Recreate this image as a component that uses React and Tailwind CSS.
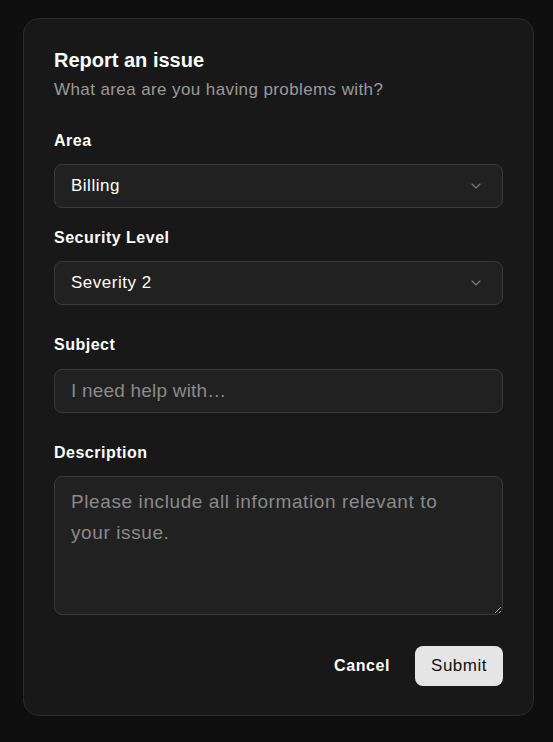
import { ChevronDown } from 'lucide-react'

function Label({ children }) {
  return <label className="block text-[16px] font-bold leading-5 tracking-[0.5px] text-white">{children}</label>
}

function SelectBox({ value }) {
  return (
    <div className="mt-[13px] flex h-11 items-center justify-between rounded-lg border border-[#3a3a3a] bg-[#212121] pl-4 pr-[18px] text-[17px] tracking-[0.5px] text-white">
      <span>{value}</span>
      <ChevronDown className="h-4 w-4 text-[#7a7a7a]" strokeWidth={1.75} />
    </div>
  )
}

export default function App() {
  return (
    <div className="min-h-[742px] bg-[#0f0f0f] pt-[18px] pl-[23px] pr-[19px] pb-[26px]" style={{ fontFamily: '"Liberation Sans", Arial, sans-serif' }}>
      <div className="rounded-2xl border border-[#2c2c2c] bg-[#181818] px-[30px] pt-[29px] pb-[29px]">
        <h1 className="text-[20px] font-bold leading-6 text-white">Report an issue</h1>
        <p className="mt-[8px] text-[17px] leading-5 tracking-[0.4px] text-[#9a9a9a]">What area are you having problems with?</p>

        <div className="mt-[31px]">
          <Label>Area</Label>
          <SelectBox value="Billing" />
        </div>

        <div className="mt-5">
          <Label>Security Level</Label>
          <SelectBox value="Severity 2" />
        </div>

        <div className="mt-[30px]">
          <Label>Subject</Label>
          <input
            className="mt-[14px] block h-11 w-full rounded-lg border border-[#3a3a3a] bg-[#212121] px-4 text-[19px] tracking-[0.2px] text-white outline-none placeholder:text-[#8a8a8a]"
            placeholder="I need help with…"
          />
        </div>

        <div className="mt-[30px]">
          <Label>Description</Label>
          <textarea
            className="mt-[13px] block h-[139px] w-full resize-y rounded-lg border border-[#3a3a3a] bg-[#212121] pl-4 pr-7 py-[9px] text-[19px] leading-[31px] tracking-[0.6px] text-white outline-none placeholder:text-[#8a8a8a]"
            placeholder="Please include all information relevant to your issue."
          />
        </div>

        <div className="mt-[31px] flex items-center justify-end gap-[25px]">
          <button type="button" className="text-[16px] font-bold tracking-[0.6px] text-white">Cancel</button>
          <button type="button" className="h-10 rounded-lg bg-[#e5e5e5] px-4 text-[17px] tracking-[0.5px] text-[#111]">Submit</button>
        </div>
      </div>
    </div>
  )
}
